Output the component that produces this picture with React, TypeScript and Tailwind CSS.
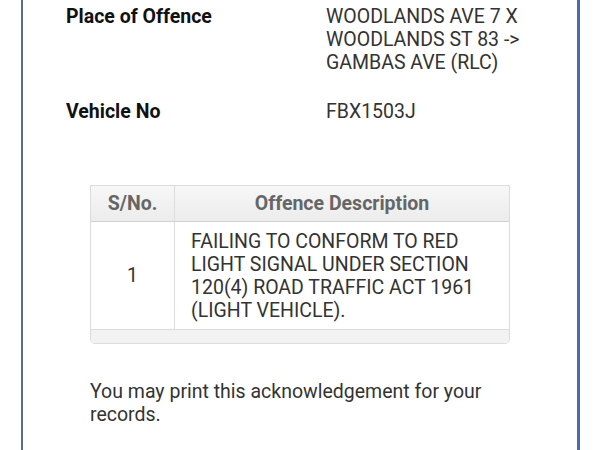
import React from 'react'

const DETAILS = [
  { label: "Place of Offence", value: ["WOODLANDS AVE 7 X", "WOODLANDS ST 83 ->", "GAMBAS AVE (RLC)"] },
  { label: "Vehicle No", value: ["FBX1503J"] },
];

const App = () => {
  return (
    <div className="w-[600px] h-[450px] bg-white overflow-hidden font-['Roboto',sans-serif]">
      <div className="ml-[21px] w-[559px] h-full border-l-2 border-r-[3px] border-l-[#5f6e7e] border-r-[#4a6cae] pt-[5px]">

        {/* Detail rows */}
        <div className="flex flex-col gap-[26px]">
          {DETAILS.map((d) => (
            <div key={d.label} className="flex text-[19.5px] leading-[23px]">
              <span className="w-[303px] shrink-0 pl-[43px] font-bold text-[#111]">{d.label}</span>
              <div className="flex flex-col text-[#333]">
                {d.value.map((v) => (
                  <span key={v}>{v}</span>
                ))}
              </div>
            </div>
          ))}
        </div>

        {/* Offence table */}
        <div className="ml-[67px] mt-[62px] w-[420px] border border-[#dcdcdc] rounded-b-[5px] overflow-hidden">
          <div className="flex h-[36px] bg-gradient-to-b from-[#f7f7f7] to-[#ececec] border-b border-[#d0d0d0] text-[19.5px] font-bold text-[#666]">
            <div className="w-[84px] flex items-center justify-center border-r border-[#dcdcdc]">S/No.</div>
            <div className="flex-1 flex items-center justify-center">Offence Description</div>
          </div>
          <div className="flex border-b border-[#dcdcdc] text-[19.5px] leading-[23px] text-[#333]">
            <div className="w-[84px] flex items-center justify-center border-r border-[#dcdcdc]">1</div>
            <div className="flex-1 pl-[16px] pt-[8px] pb-[7px]">
              FAILING TO CONFORM TO RED<br />
              LIGHT SIGNAL UNDER SECTION<br />
              120(4) ROAD TRAFFIC ACT 1961<br />
              (LIGHT VEHICLE).
            </div>
          </div>
          <div className="h-[13px] bg-[#f2f2f2]" />
        </div>

        <p className="ml-[67px] mt-[36px] text-[19.5px] leading-[23px] text-[#333]">
          You may print this acknowledgement for your<br />
          records.
        </p>
      </div>
    </div>
  )
}

export default App
